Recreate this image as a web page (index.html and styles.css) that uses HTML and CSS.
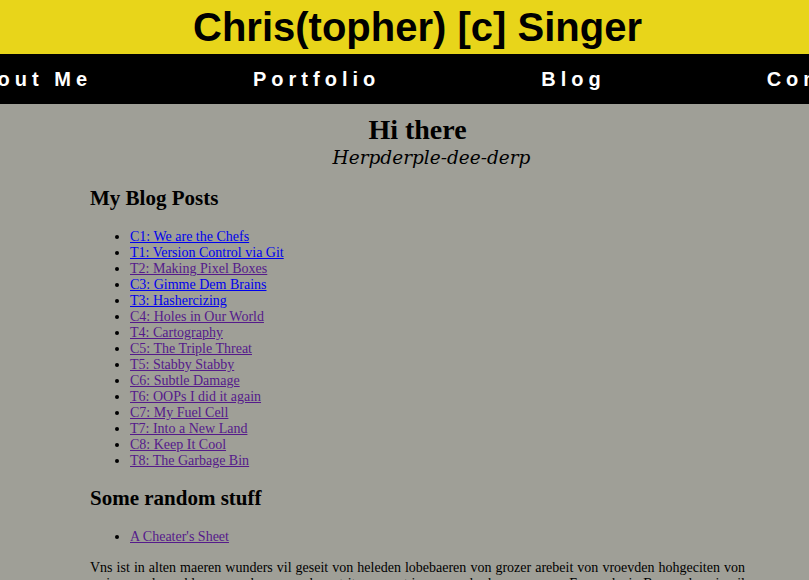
FILE: index.html
```html
<!DOCTYPE html>
<html>
<head>
<meta charset="utf-8">
<title>Chris(topher) [c] Singer</title>
<link rel="stylesheet" href="styles.css">
</head>
<body>
<div class="page">
<header class="banner">
  <h1 class="site-title">Chris(topher) [c] Singer</h1>
</header>
<nav class="topnav">
  <a class="nav-item" href="#">About Me</a>
  <a class="nav-item" href="#">Portfolio</a>
  <a class="nav-item" href="#">Blog</a>
  <a class="nav-item" href="#">Contact</a>
</nav>
<main class="content">
  <h1 class="greeting">Hi there</h1>
  <p class="tagline">Herpderple-dee-derp</p>

  <h2 class="section-title">My Blog Posts</h2>
  <ul class="post-list">
    <li><a class="link" href="#">C1: We are the Chefs</a></li>
    <li><a class="link" href="#">T1: Version Control via Git</a></li>
    <li><a class="link visited" href="#">T2: Making Pixel Boxes</a></li>
    <li><a class="link" href="#">C3: Gimme Dem Brains</a></li>
    <li><a class="link" href="#">T3: Hashercizing</a></li>
    <li><a class="link visited" href="#">C4: Holes in Our World</a></li>
    <li><a class="link visited" href="#">T4: Cartography</a></li>
    <li><a class="link visited" href="#">C5: The Triple Threat</a></li>
    <li><a class="link visited" href="#">T5: Stabby Stabby</a></li>
    <li><a class="link visited" href="#">C6: Subtle Damage</a></li>
    <li><a class="link visited" href="#">T6: OOPs I did it again</a></li>
    <li><a class="link visited" href="#">C7: My Fuel Cell</a></li>
    <li><a class="link visited" href="#">T7: Into a New Land</a></li>
    <li><a class="link visited" href="#">C8: Keep It Cool</a></li>
    <li><a class="link visited" href="#">T8: The Garbage Bin</a></li>
  </ul>

  <h2 class="section-title">Some random stuff</h2>
  <ul class="post-list">
    <li><a class="link visited" href="#">A Cheater's Sheet</a></li>
  </ul>

  <p class="body-text">Vns ist in alten maeren wunders vil geseit von heleden lobebaeren von grozer arebeit von vroevden hohgeciten von weinen und von klagen von kuener recken striten muget ir nu wunder hoeren sagen. Ez wuohs in Burgonden ein vil edel magedin, daz in allen landen niht schoeners mohte sin.</p>
</main>
</div>
</body>
</html>
```
FILE: styles.css
```css
html, body {
  margin: 0;
  padding: 0;
  overflow: hidden;
}
body {
  background: #9f9f97;
  font-family: "Liberation Serif", "Times New Roman", serif;
  font-size: 14px;
  color: #000;
}
.page {
  width: 835px;
}
.banner {
  background: #e8d51a;
  height: 54px;
  display: flex;
  align-items: center;
  justify-content: center;
}
.site-title {
  margin: 0;
  font-family: "Liberation Sans", Arial, sans-serif;
  font-weight: bold;
  font-size: 40px;
  line-height: 1;
}
.topnav {
  background: #000;
  height: 50px;
  display: flex;
  align-items: center;
  justify-content: center;
  gap: 161px;
  padding-left: 2px;
  white-space: nowrap;
  overflow: hidden;
}
.nav-item {
  flex: none;
  color: #fff;
  text-decoration: none;
  font-family: "Liberation Sans", Arial, sans-serif;
  font-weight: bold;
  font-size: 20px;
  letter-spacing: 5px;
}
.content {
  width: 655px;
  margin: 0 auto;
}
.greeting {
  margin: 0;
  padding-top: 10px;
  text-align: center;
  font-size: 28px;
  line-height: 31px;
}
.tagline {
  margin: 0;
  padding: 1px 0 0 28px;
  text-align: center;
  font-family: "DejaVu Serif", serif;
  font-style: italic;
  font-size: 18.5px;
  line-height: 24px;
}
.section-title {
  margin: 16px 0 0;
  font-size: 21px;
  line-height: 24px;
}
.post-list {
  margin: 19px 0 0;
  padding-left: 40px;
  line-height: 16px;
}
.post-list + .section-title {
  margin-top: 17px;
}
.link {
  color: #0000ee;
}
.link.visited {
  color: #551a8b;
}
.body-text {
  margin: 15px 0 0;
  text-align: justify;
  line-height: 16px;
}
```
